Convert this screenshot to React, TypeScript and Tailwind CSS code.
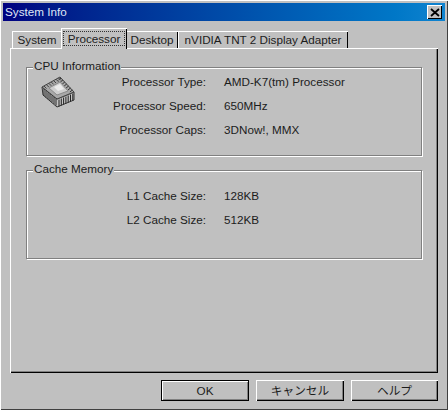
const FONT = 'font-["Liberation_Sans","Noto_Sans_CJK_JP",sans-serif]';

const STRIPES = [0, 1, 2, 3, 4, 5, 6];

const CpuIcon = () => (
  <svg width="34" height="32" viewBox="0 0 34 32" className="block">
    {/* sides */}
    <polygon points="1,11 16,23 33,16 33,24 16,31 2,19" fill="#c4c4c4" stroke="#333" strokeWidth="1" />
    {/* top */}
    <polygon points="1,11 19,1 33,16 16,23" fill="#a8a8a8" stroke="#444" strokeWidth="1" />
    {/* side pins */}
    {STRIPES.map((i) => (
      <line key={`l${i}`} x1={3 + i * 2} y1={13 + i * 1.6} x2={3 + i * 2} y2={20 + i * 1.6} stroke="#222" strokeWidth="1" />
    ))}
    {STRIPES.map((i) => (
      <line key={`r${i}`} x1={18 + i * 2.3} y1={23.5 - i * 1} x2={18 + i * 2.3} y2={30.5 - i * 1} stroke="#222" strokeWidth="1" />
    ))}
    {/* top edge pins */}
    {STRIPES.map((i) => (
      <line key={`t${i}`} x1={20 + i * 1.9} y1={2 + i * 2} x2={17.5 + i * 1.9} y2={4 + i * 2} stroke="#333" strokeWidth="1" />
    ))}
    {STRIPES.map((i) => (
      <line key={`b${i}`} x1={3 + i * 2.4} y1={10 - i * 1.35} x2={5.5 + i * 2.4} y2={12.5 - i * 1.35} stroke="#444" strokeWidth="1" />
    ))}
    {/* die */}
    <polygon points="8,12 19,6 27,15 16,19" fill="#cfcfcf" stroke="#8a8a8a" strokeWidth="1" />
    <polygon points="13,11 19,8 23,13 17,15" fill="#ececec" />
  </svg>
);

const Tab = ({ label, active, width }: { label: string; active?: boolean; width: string }) =>
  active ? (
    <div className={`relative z-10 -mx-[1px] -mt-[3px] flex h-[21px] items-start justify-center self-start bg-[#c0c0c0] pt-[3px] shadow-[inset_1px_1px_0_#fff,inset_-1px_0_0_#000] ${width}`}>
      <span className="border border-dotted border-[#333] px-[4px] text-[11.7px] leading-[13px]">{label}</span>
    </div>
  ) : (
    <div className={`flex h-[17px] items-center justify-center bg-[#c0c0c0] text-[11.7px] shadow-[inset_1px_1px_0_#fff,inset_-1px_0_0_#000] ${width}`}>
      {label}
    </div>
  );

const GroupBox = ({ title, className, children }: { title: string; className: string; children: React.ReactNode }) => (
  <div className={`relative border border-[#808080] shadow-[1px_1px_0_#fff,inset_1px_1px_0_#fff] ${className}`}>
    <span className="absolute -top-[9px] left-[6px] bg-[#c0c0c0] px-[1px] text-[11.7px] leading-[14px]">{title}</span>
    {children}
  </div>
);

const InfoRow = ({ label, value }: { label: string; value: string }) => (
  <div className="flex h-[24px] items-center text-[11.7px]">
    <span className="w-[131px] text-right">{label}</span>
    <span className="ml-[18px]">{value}</span>
  </div>
);

const DialogButton = ({ label, isDefault, width }: { label: string; isDefault?: boolean; width: string }) => (
  <button
    className={`flex h-[21px] items-center justify-center bg-[#c0c0c0] text-[11.7px] ${width} ${
      isDefault
        ? 'border border-black shadow-[inset_1px_1px_0_#fff,inset_-1px_-1px_0_#808080]'
        : 'shadow-[inset_1px_1px_0_#fff,inset_-1px_-1px_0_#000,inset_-2px_-2px_0_#808080]'
    }`}
  >
    {label}
  </button>
);

export default function App() {
  return (
    <div className={`flex h-[410px] w-[448px] flex-col bg-[#c0c0c0] p-[3px] text-[#1c1c1c] shadow-[inset_1px_1px_0_#fff,inset_-1px_-1px_0_#404040] ${FONT}`}>
      {/* Title bar */}
      <div className="flex h-[18px] items-center justify-between bg-gradient-to-r from-[#000080] to-[#1084d0] pl-[2px] pr-[3px]">
        <span className="text-[11.7px] text-[#dfe6f5]">System Info</span>
        <button className="flex h-[14px] w-[15px] items-center justify-center bg-[#c0c0c0] shadow-[inset_1px_1px_0_#fff,inset_-1px_-1px_0_#000]">
          <svg width="10" height="9" viewBox="0 0 10 9">
            <path d="M1 1 L9 8 M9 1 L1 8" stroke="#000" strokeWidth="1.8" />
          </svg>
        </button>
      </div>

      <div className="flex flex-1 flex-col px-[7px] pt-[10px]">
        {/* Tabs */}
        <div className="flex h-[17px] items-end pl-[2px]">
          <Tab label="System" width="w-[50px]" />
          <Tab label="Processor" active width="w-[66px]" />
          <Tab label="Desktop" width="w-[52px]" />
          <Tab label="nVIDIA TNT 2 Display Adapter" width="w-[170px]" />
        </div>

        {/* Tab panel */}
        <div className="flex h-[325px] w-[428px] flex-col px-[16px] pt-[19px] shadow-[inset_1px_1px_0_#fff,inset_-1px_-1px_0_#000,inset_-2px_-2px_0_#808080]">
          <GroupBox title="CPU Information" className="h-[89px] w-[396px]">
            <div className="flex pl-[14px] pt-[2px]">
              <div className="mt-[6px] w-[34px] shrink-0">
                <CpuIcon />
              </div>
              <div className="flex flex-col">
                <InfoRow label="Processor Type:" value="AMD-K7(tm) Processor" />
                <InfoRow label="Processor Speed:" value="650MHz" />
                <InfoRow label="Processor Caps:" value="3DNow!, MMX" />
              </div>
            </div>
          </GroupBox>

          <GroupBox title="Cache Memory" className="mt-[14px] h-[89px] w-[396px]">
            <div className="flex flex-col pl-[48px] pt-[13px]">
              <InfoRow label="L1 Cache Size:" value="128KB" />
              <InfoRow label="L2 Cache Size:" value="512KB" />
            </div>
          </GroupBox>
        </div>

        {/* Buttons */}
        <div className="mt-[7px] flex w-[428px] justify-end gap-[7px]">
          <DialogButton label="OK" isDefault width="w-[88px]" />
          <DialogButton label="キャンセル" width="w-[88px]" />
          <DialogButton label="ヘルプ" width="w-[87px]" />
        </div>
      </div>
    </div>
  );
}
